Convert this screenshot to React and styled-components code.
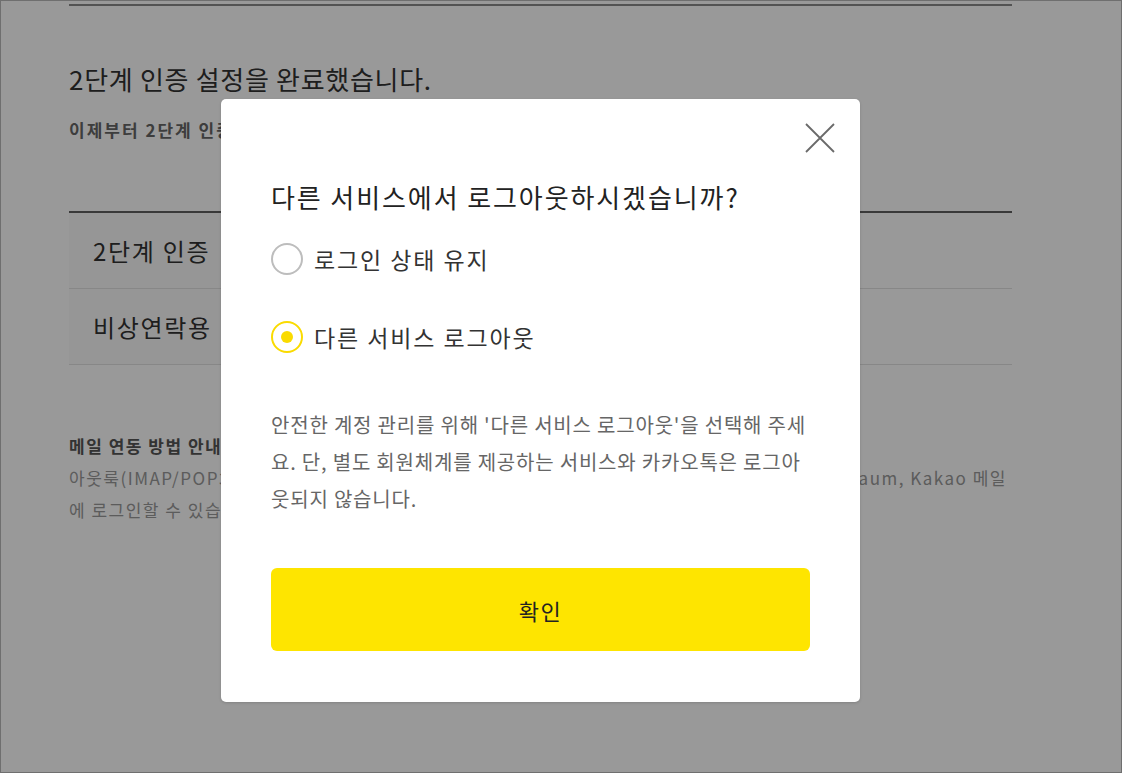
import { useState } from 'react';
import styled, { createGlobalStyle } from 'styled-components';

const GlobalStyle = createGlobalStyle`
	html, body {
		margin: 0;
		padding: 0;
		background: #fff;
	}
	body {
		font-family: 'Noto Sans CJK KR', 'Noto Sans', sans-serif;
		color: #333;
	}
	* {
		box-sizing: border-box;
	}
`;

const options = [
	{ id: 'keep', label: '로그인 상태 유지' },
	{ id: 'logout', label: '다른 서비스 로그아웃' }
];

export default function App() {
	const [choice, setChoice] = useState('logout');

	return (
		<>
			<GlobalStyle />
			<Frame>
				<Page>
					<TopRule />
					<Heading>2단계 인증 설정을 완료했습니다.</Heading>
					<Sub>이제부터 2단계 인증으로 계정을 보호합니다.</Sub>
					<Table>
						<tbody>
							<tr>
								<Th>2단계 인증</Th>
								<Td>사용 중</Td>
							</tr>
							<tr>
								<Th>비상연락용</Th>
								<Td>등록된 이메일</Td>
							</tr>
						</tbody>
					</Table>
					<Notice>
						<NoticeTitle>메일 연동 방법 안내</NoticeTitle>
						<NoticeRow>
							<NoticeText>아웃룩(IMAP/POP3) 등 외부 메일 프로그램은</NoticeText>
							<NoticeText>Daum, Kakao 메일</NoticeText>
						</NoticeRow>
						<NoticeText>에 로그인할 수 있습니다.</NoticeText>
					</Notice>
				</Page>

				<Overlay>
					<Modal>
						<CloseButton aria-label='닫기'>
							<svg width='30' height='30' viewBox='0 0 30 30'>
								<path d='M1 1 L29 29 M29 1 L1 29' stroke='#6a6a6a' strokeWidth='1.8' fill='none' />
							</svg>
						</CloseButton>
						<Title>다른 서비스에서 로그아웃하시겠습니까?</Title>
						<OptionList>
							{options.map(opt => (
								<Option key={opt.id} onClick={() => setChoice(opt.id)}>
									<Radio checked={choice === opt.id} />
									<OptionLabel>{opt.label}</OptionLabel>
								</Option>
							))}
						</OptionList>
						<Description>
							안전한 계정 관리를 위해 '다른 서비스 로그아웃'을 선택해 주세
							<br />
							요. 단, 별도 회원체계를 제공하는 서비스와 카카오톡은 로그아
							<br />
							웃되지 않습니다.
						</Description>
						<ConfirmButton>확인</ConfirmButton>
					</Modal>
				</Overlay>
			</Frame>
		</>
	);
}

const Frame = styled.div`
	position: relative;
	width: 1122px;
	height: 773px;
	overflow: hidden;
	background: #fff;
`;

const Page = styled.div`
	padding: 4px 110px 0 69px;
`;

const TopRule = styled.div`
	height: 2px;
	background: #8a8a8a;
`;

const Heading = styled.h2`
	margin: 55px 0 0;
	font-size: 26px;
	font-weight: 400;
	line-height: 36px;
	color: #333;
	letter-spacing: 0.7px;
`;

const Sub = styled.p`
	margin: 21px 0 0;
	font-size: 17px;
	font-weight: 700;
	line-height: 24px;
	color: #666;
	letter-spacing: 2px;
`;

const Table = styled.table`
	width: 100%;
	margin-top: 69px;
	border-collapse: collapse;
	border-top: 2px solid #5f5f5f;
`;

const Th = styled.th`
	width: 200px;
	height: 76px;
	padding: 0 0 0 24px;
	text-align: left;
	font-size: 24px;
	font-weight: 400;
	color: #333;
	background: #fafafa;
	border-bottom: 1px solid #e2e2e2;
	letter-spacing: 1.7px;
`;

const Td = styled.td`
	padding: 0 24px;
	font-size: 18px;
	color: #555;
	border-bottom: 1px solid #e2e2e2;
`;

const Notice = styled.div`
	margin-top: 65px;
	font-size: 17px;
	line-height: 32px;
	letter-spacing: 1.5px;
`;

const NoticeTitle = styled.div`
	font-weight: 700;
	color: #555;
`;

const NoticeRow = styled.div`
	display: flex;
	justify-content: space-between;
	padding-right: 5px;
`;

const NoticeText = styled.div`
	color: #999;
	white-space: nowrap;
`;

const Overlay = styled.div`
	position: absolute;
	inset: 0;
	display: flex;
	justify-content: center;
	align-items: flex-start;
	padding: 99px 41px 0 0;
	background: rgba(0, 0, 0, 0.4);
	box-shadow: inset 0 0 0 1px #6f6f6f;
`;

const Modal = styled.div`
	position: relative;
	width: 639px;
	height: 603px;
	padding: 80px 50px 0;
	background: #fff;
	border-radius: 5px;
	box-shadow: 0 1px 3px rgba(0, 0, 0, 0.15);
`;

const CloseButton = styled.button`
	position: absolute;
	top: 24px;
	right: 25px;
	display: flex;
	padding: 0;
	border: 0;
	background: none;
	cursor: pointer;
`;

const Title = styled.h3`
	margin: 0;
	font-size: 26px;
	font-weight: 400;
	line-height: 36px;
	color: #222;
	letter-spacing: 1.9px;
`;

const OptionList = styled.div`
	display: flex;
	flex-direction: column;
	gap: 46px;
	margin-top: 28px;
`;

const Option = styled.label`
	display: flex;
	align-items: center;
	gap: 11px;
	height: 32px;
	cursor: pointer;
`;

const Radio = styled.span`
	position: relative;
	flex: none;
	width: 32px;
	height: 32px;
	border-radius: 50%;
	border: 2px solid ${p => (p.checked ? '#fadb00' : '#bdbdbd')};
	background: #fff;

	&::after {
		content: '';
		display: ${p => (p.checked ? 'block' : 'none')};
		position: absolute;
		top: 50%;
		left: 50%;
		width: 12px;
		height: 12px;
		margin: -6px 0 0 -6px;
		border-radius: 50%;
		background: #fadb00;
	}
`;

const OptionLabel = styled.span`
	font-size: 23px;
	line-height: 32px;
	color: #333;
	letter-spacing: 1.9px;
`;

const Description = styled.p`
	margin: 53px -10px 0 0;
	font-size: 20px;
	line-height: 37px;
	color: #666;
	letter-spacing: 0.8px;
	white-space: nowrap;
`;

const ConfirmButton = styled.button`
	display: block;
	width: 100%;
	height: 83px;
	margin-top: 51px;
	border: 0;
	border-radius: 6px;
	background: #fee500;
	font: inherit;
	font-size: 22px;
	letter-spacing: 1.5px;
	color: #222;
	cursor: pointer;
`;
